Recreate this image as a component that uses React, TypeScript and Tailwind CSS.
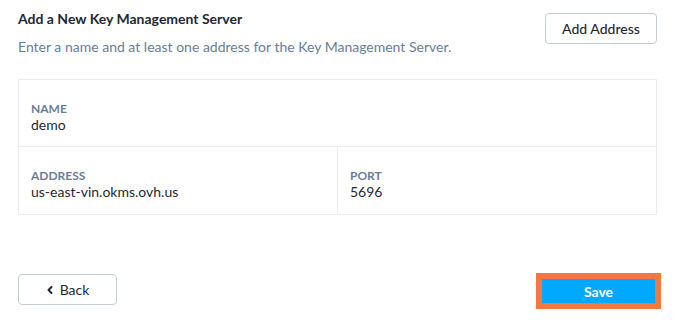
function Field({ label, value }: { label: string; value: string }) {
  return (
    <div className="flex flex-col justify-center px-3">
      <span className="text-[12px] font-bold uppercase leading-[14px] text-[#6b7d96]">{label}</span>
      <span className="text-[14px] leading-[17px] text-[#1f2933]">{value}</span>
    </div>
  );
}

export default function App() {
  return (
    <div className="flex h-[320px] w-[673px] flex-col bg-white pl-[18px] pr-[16px] pt-[8px] font-['Lato',sans-serif] text-[#1f2933]">
      <div className="flex items-start justify-between">
        <div className="pt-[1px]">
          <h2 className="text-[14px] font-bold leading-[20px]">Add a New Key Management Server</h2>
          <p className="mt-[9px] text-[14px] leading-[18px] text-[#6b7d96]">
            Enter a name and at least one address for the Key Management Server.
          </p>
        </div>
        <button className="mt-[5px] h-[31px] w-[112px] rounded-[4px] border border-[#c5cbd3] bg-white text-[14px] font-medium text-[#1f2933]">
          Add Address
        </button>
      </div>

      <div className="mt-[23px] flex flex-col border border-[#ececec]">
        <div className="flex h-[67px] border-b border-[#ececec] pt-[8px]">
          <Field label="Name" value="demo" />
        </div>
        <div className="grid h-[67px] grid-cols-[319px_1fr]">
          <div className="flex border-r border-[#ececec] pt-[8px]">
            <Field label="Address" value="us-east-vin.okms.ovh.us" />
          </div>
          <div className="flex pt-[8px]">
            <Field label="Port" value="5696" />
          </div>
        </div>
      </div>

      <div className="mt-auto mb-[11px] flex items-end justify-between">
        <button className="mb-[4px] flex h-[31px] w-[99px] items-center justify-center gap-[6px] rounded-[4px] border border-[#c5cbd3] bg-white text-[14px] text-[#1f2933]">
          <svg width="8" height="10" viewBox="0 0 8 10" fill="none" stroke="#1f2933" strokeWidth="2" strokeLinecap="round" strokeLinejoin="round">
            <path d="M5.5 2 L2.5 5 L5.5 8" />
          </svg>
          Back
        </button>
        <div className="-mr-[4px] border-[6px] border-[#f6763f]">
          <button className="block h-[24px] w-[113px] bg-[#00a8ff] text-[14px] font-bold text-white">Save</button>
        </div>
      </div>
    </div>
  );
}
